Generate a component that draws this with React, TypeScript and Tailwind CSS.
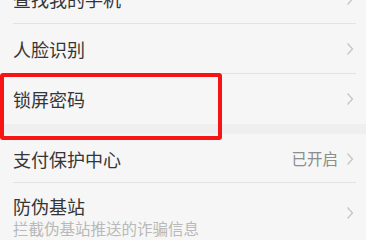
import React from "react";

type Item = {
  title: string;
  value?: string;
  divider?: boolean;
};

function Chevron() {
  return (
    <svg width="8" height="14" viewBox="0 0 8 14" className="shrink-0">
      <path d="M1.5 1.5 L6.5 7 L1.5 12.5" fill="none" stroke="#c4c6c4" strokeWidth="1.3" />
    </svg>
  );
}

function Row({ item, height }: { item: Item; height: string }) {
  return (
    <div className={`relative flex items-center pl-[13px] pr-[12px] ${height}`}>
      <p className="flex-1 text-[18px] leading-[22px] text-[#353535]">{item.title}</p>
      {item.value && (
        <span className="mr-[8px] text-[15.5px] text-[#8c8d8c]">{item.value}</span>
      )}
      <Chevron />
      {item.divider && (
        <div className="absolute bottom-0 left-[13px] right-[10px] h-px bg-[#e2e3e2]" />
      )}
    </div>
  );
}

export default function App() {
  return (
    <div
      className="relative h-[240px] w-[366px] overflow-hidden bg-[#f5f6f5]"
      style={{ fontFamily: '"Noto Sans CJK SC", "Noto Sans", sans-serif' }}
    >
      <div className="-mt-[27px]">
        <Row item={{ title: "查找我的手机", divider: true }} height="h-[51px]" />
        <Row item={{ title: "人脸识别", divider: true }} height="h-[50px]" />
        <Row item={{ title: "锁屏密码" }} height="h-[50px]" />
        <div className="h-[10px] bg-[#eeefee]" />
        <Row item={{ title: "支付保护中心", value: "已开启", divider: true }} height="h-[49px]" />
        <div className="flex h-[66px] items-start pl-[13px] pr-[12px] pt-[12px]">
          <div className="flex-1">
            <p className="text-[18px] leading-[22px] text-[#353535]">防伪基站</p>
            <p className="mt-[1px] whitespace-nowrap text-[15.5px] leading-[20px] text-[#b8b9b8]">
              拦截伪基站推送的诈骗信息
            </p>
          </div>
          <div className="mt-[11px]">
            <Chevron />
          </div>
        </div>
      </div>
      <div className="absolute left-0 top-[73px] h-[67px] w-[222px] rounded-[3px] border-[4px] border-[#f81414]" />
    </div>
  );
}
